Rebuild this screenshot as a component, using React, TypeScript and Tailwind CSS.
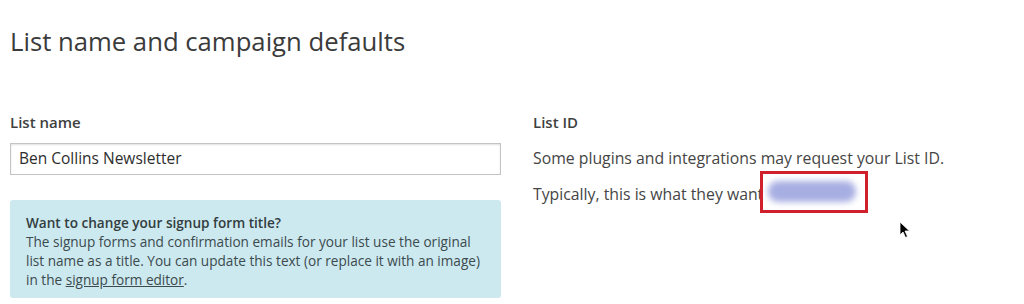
import React from "react";

export default function App() {
  return (
    <div
      className="w-[1024px] h-[304px] bg-white overflow-hidden relative text-[#404040]"
      style={{ fontFamily: '"Open Sans", "Noto Sans", sans-serif' }}
    >
      <div className="pl-[10px] pt-[26px]">
        <h1 className="text-[25.7px] leading-[32px] font-normal text-[#3b3b3b]">
          List name and campaign defaults
        </h1>
        <div className="flex mt-[54px]">
          <div className="w-[491px] flex flex-col">
            <div className="text-[15px] leading-[20px] font-semibold text-[#3f3f3f]">List name</div>
            <div className="mt-[11px] h-[32px] border border-[#c4c4c4] shadow-[inset_0_1px_2px_rgba(0,0,0,0.12)] flex items-center pl-[8px] text-[15.5px] text-[#2e2e2e]">
              Ben Collins Newsletter
            </div>
            <div className="mt-[25px] h-[98px] bg-[#cbe9ef] rounded-[3px] pl-[16px] pr-[16px] pt-[13px] text-[13.6px] leading-[19px] text-[#3d4a4e]">
              <div className="font-semibold text-[#333d40]">Want to change your signup form title?</div>
              <div>
                The signup forms and confirmation emails for your list use the original list name as a title. You can update this text (or replace it with an image) in the <span className="underline">signup form editor</span>.
              </div>
            </div>
          </div>
          <div className="ml-[32px] flex flex-col">
            <div className="text-[15px] leading-[20px] font-semibold text-[#3f3f3f]">List ID</div>
            <div className="mt-[15px] text-[15.8px] leading-[22px] text-[#454545]">
              Some plugins and integrations may request your List ID.
            </div>
            <div className="mt-[14px] text-[15.8px] leading-[22px] text-[#454545]">
              Typically, this is what they want
            </div>
          </div>
        </div>
      </div>
      <div className="absolute left-[760px] top-[171px] w-[108px] h-[42px] border-[3px] border-[#d0202c]">
        <div className="absolute left-[5px] top-[7px] w-[88px] h-[21px] rounded-[10px] bg-[#a7aee2] blur-[3px]"></div>
      </div>
      <svg className="absolute left-[899px] top-[221px]" width="12" height="18" viewBox="0 0 12 18">
        <path d="M1 1 L1 14 L4 11 L6.5 16.5 L8.5 15.5 L6 10 L10.5 10 Z" fill="#000" stroke="#fff" strokeWidth="0.8" />
      </svg>
    </div>
  );
}
